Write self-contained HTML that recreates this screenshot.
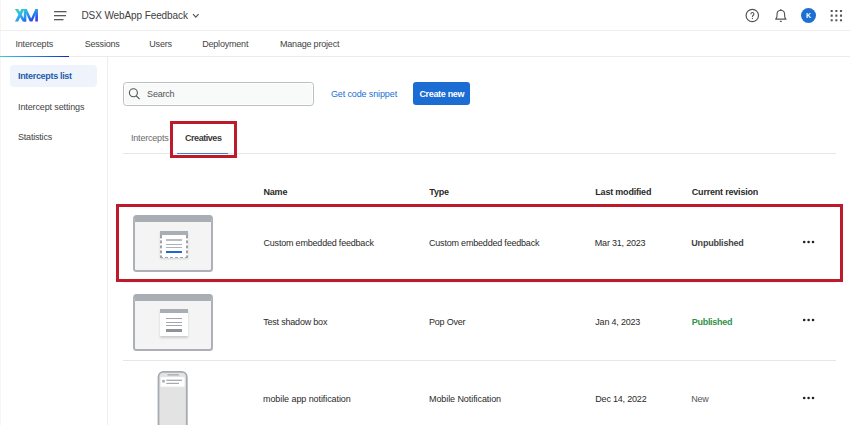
<!DOCTYPE html>
<html><head><meta charset="utf-8">
<style>
*{margin:0;padding:0;box-sizing:border-box}
html,body{width:850px;height:425px;overflow:hidden;background:#fff}
body{position:relative;font-family:"Liberation Sans",sans-serif;color:#2a2a2a}
.a{position:absolute;white-space:nowrap}
.t{position:absolute;white-space:nowrap;font-size:9px;line-height:10px;letter-spacing:-0.2px}
.b{font-weight:bold}
.hl{position:absolute;background:#e6e6e6;height:1px}
</style></head><body>

<div class="a" style="left:0;top:0;width:1px;height:425px;background:#f5f5f5"></div>
<!-- header -->
<svg class="a" style="left:0;top:0" width="50" height="30" viewBox="0 0 50 30">
  <defs>
    <linearGradient id="xg" gradientUnits="userSpaceOnUse" x1="15" y1="9" x2="25.4" y2="28.2">
      <stop offset="0" stop-color="#33d99a"/>
      <stop offset="0.25" stop-color="#32c0e0"/>
      <stop offset="0.5" stop-color="#2b9ef2"/>
      <stop offset="0.78" stop-color="#2356e8"/>
      <stop offset="1" stop-color="#5a2ddf"/>
    </linearGradient>
  </defs>
  <g fill="url(#xg)">
    <polygon points="14.9,9.1 18.1,9.1 26.0,21.5 22.8,21.5"/>
    <polygon points="21.4,9.1 24.5,9.1 18.1,21.5 14.9,21.5"/>
    <rect x="23.8" y="9.1" width="2.5" height="12.4"/>
    <polygon points="23.8,9.1 26.8,9.1 31.1,18.4 35.4,9.1 37.9,9.1 32.4,21.5 29.8,21.5"/>
    <rect x="35.3" y="9.1" width="2.6" height="12.4"/>
  </g>
</svg>
<svg class="a" style="left:53px;top:10px" width="14" height="11" viewBox="0 0 14 11">
  <rect x="1" y="1" width="12.5" height="1.3" fill="#5a5a5a"/>
  <rect x="1" y="5" width="12" height="1.3" fill="#5a5a5a"/>
  <rect x="1" y="9" width="9.5" height="1.3" fill="#5a5a5a"/>
</svg>
<div class="a" style="left:81.5px;top:11px;font-size:10px;line-height:10px;color:#3d3d3d;letter-spacing:-0.1px">DSX WebApp Feedback</div>
<svg class="a" style="left:192px;top:13px" width="8" height="6" viewBox="0 0 8 6"><path d="M1 1.2 L3.8 4.2 L6.6 1.2" fill="none" stroke="#555" stroke-width="1.2"/></svg>

<!-- right icons -->
<svg class="a" style="left:744px;top:8px" width="16" height="16" viewBox="0 0 16 16">
  <circle cx="8.3" cy="7.5" r="6.2" fill="none" stroke="#555" stroke-width="1.2"/>
  <path d="M6.9 6.3 Q6.9 4.5 8.4 4.5 Q9.9 4.5 9.9 6 Q9.9 7 9 7.5 Q8.4 7.9 8.4 8.7 L8.4 9.1" fill="none" stroke="#555" stroke-width="1.1"/><circle cx="8.4" cy="10.4" r="0.65" fill="#555"/>
</svg>
<svg class="a" style="left:774px;top:8px" width="14" height="15" viewBox="0 0 14 15">
  <path d="M1.6 11.1 Q2.9 10.2 3 8 L3 6.2 Q3 2.7 6.8 2.3 Q10.6 2.7 10.6 6.2 L10.6 8 Q10.7 10.2 12 11.1 Z" fill="none" stroke="#555" stroke-width="1.15" stroke-linejoin="round"/>
  <path d="M5.8 2.3 L6.8 1.6 L7.8 2.3 Z" fill="#555" stroke="#555" stroke-width="0.7" stroke-linejoin="round"/>
  <rect x="5.8" y="12.7" width="2" height="1.2" rx="0.4" fill="#555"/>
</svg>
<div class="a" style="left:801px;top:8px;width:15.2px;height:15.2px;border-radius:50%;background:#1f6fd2"></div>
<div class="a b" style="left:801px;top:10.6px;width:15.2px;text-align:center;font-size:7px;line-height:10px;color:#fff">K</div>
<svg class="a" style="left:830px;top:9px" width="14" height="14" viewBox="0 0 14 14" fill="#555"><rect x="0.65" y="0.95" width="2.1" height="2.1" rx="0.5"/><rect x="5.30" y="0.95" width="2.1" height="2.1" rx="0.5"/><rect x="9.95" y="0.95" width="2.1" height="2.1" rx="0.5"/><rect x="0.65" y="5.55" width="2.1" height="2.1" rx="0.5"/><rect x="5.30" y="5.55" width="2.1" height="2.1" rx="0.5"/><rect x="9.95" y="5.55" width="2.1" height="2.1" rx="0.5"/><rect x="0.65" y="10.15" width="2.1" height="2.1" rx="0.5"/><rect x="5.30" y="10.15" width="2.1" height="2.1" rx="0.5"/><rect x="9.95" y="10.15" width="2.1" height="2.1" rx="0.5"/></svg>
<div class="hl" style="left:0;top:30px;width:850px;background:#efefef"></div>

<!-- nav -->
<div class="t" style="left:15.5px;top:39px;color:#444">Intercepts</div>
<div class="t" style="left:84.7px;top:39px;color:#444">Sessions</div>
<div class="t" style="left:149.3px;top:39px;color:#444">Users</div>
<div class="t" style="left:202.2px;top:39px;color:#444">Deployment</div>
<div class="t" style="left:280px;top:39px;color:#444">Manage project</div>
<div class="hl" style="left:0;top:56px;width:850px;background:#ececec"></div>
<div class="a" style="left:0;top:55.6px;width:69px;height:1.7px;background:linear-gradient(90deg,#3ccfc0,#28b0ea 20%,#1e86e4 50%,#1a4fd0 80%,#1a22b5)"></div>

<!-- sidebar -->
<div class="a" style="left:107px;top:57px;width:1px;height:368px;background:#eeeeee"></div>
<div class="a" style="left:10px;top:64.8px;width:87px;height:22.3px;border-radius:4px;background:#eff4fc"></div>
<div class="t b" style="left:18px;top:70.6px;color:#1f5aae;letter-spacing:-0.32px">Intercepts list</div>
<div class="t" style="left:18px;top:101.8px;color:#444;letter-spacing:-0.12px">Intercept settings</div>
<div class="t" style="left:18px;top:132.1px;color:#444">Statistics</div>

<!-- toolbar -->
<div class="a" style="left:123px;top:82px;width:191px;height:23.6px;border:1.6px solid #bcbebf;border-radius:3.5px;background:#f8f9f9;box-shadow:inset 0 0 0 1px #fff"></div>
<svg class="a" style="left:127px;top:87px" width="15" height="15" viewBox="0 0 15 15">
  <circle cx="6.4" cy="5.8" r="4" fill="none" stroke="#555" stroke-width="1.1"/>
  <path d="M9.3 8.8 L12.6 12.1" stroke="#555" stroke-width="1.2"/>
</svg>
<div class="t" style="left:147.1px;top:89.1px;color:#555">Search</div>
<div class="t" style="left:330.9px;top:88.9px;color:#2270d4;letter-spacing:-0.12px">Get code snippet</div>
<div class="a" style="left:413px;top:82.3px;width:56.5px;height:23.2px;border-radius:3px;background:#1b6cd3"></div>
<div class="t b" style="left:419.4px;top:89px;color:#fff;letter-spacing:-0.32px">Create new</div>

<!-- tabs -->
<div class="t" style="left:131px;top:132.8px;color:#6b6b6b">Intercepts</div>
<div class="t b" style="left:185px;top:132.8px;color:#3a3a3a;letter-spacing:-0.45px">Creatives</div>
<div class="hl" style="left:123px;top:153px;width:713px"></div>
<div class="a" style="left:177px;top:152.5px;width:51px;height:1.5px;background:#3b82e0"></div>
<div class="a" style="left:170px;top:121px;width:67px;height:37px;border:3px solid #bd1a2c"></div>

<!-- table header -->
<div class="t b" style="left:263.5px;top:186.8px">Name</div>
<div class="t b" style="left:429.3px;top:186.8px">Type</div>
<div class="t b" style="left:595.3px;top:186.8px">Last modified</div>
<div class="t b" style="left:691.8px;top:186.8px">Current revision</div>

<!-- row 1 -->
<div class="hl" style="left:123px;top:282px;width:713px;background:#eef2f2"></div>
<div class="a" style="left:133px;top:215px;width:80px;height:57px;border:2px solid #adb1b6;border-top:7px solid #a9aeb4;border-radius:3.5px;background:#f4f4f4"></div>
<div class="a" style="left:160px;top:230.8px;width:28px;height:27.5px;box-shadow:0 1px 2px rgba(0,0,0,.12)">
  <div class="a" style="left:0;top:0;width:100%;height:4px;background:#a9aeb4"></div>
  <div class="a" style="left:0;top:4px;width:28px;height:23.5px;background:#fff"></div>
  <div class="a" style="left:0;top:4px;width:1.6px;height:23.5px;background:repeating-linear-gradient(to bottom,#a0a4a9 0 2.6px,transparent 2.6px 5.05px) 0 0.4px"></div>
  <div class="a" style="left:26.4px;top:4px;width:1.6px;height:23.5px;background:repeating-linear-gradient(to bottom,#a0a4a9 0 2.6px,transparent 2.6px 5.05px) 0 0.4px"></div>
  <div class="a" style="left:0;top:25.9px;width:28px;height:1.6px;background:repeating-linear-gradient(to right,#a0a4a9 0 2.6px,transparent 2.6px 5.1px)"></div>
  <div class="a" style="left:6px;top:8.5px;width:16px;height:1.5px;background:#b9bdc1"></div>
  <div class="a" style="left:6px;top:12.8px;width:16px;height:1.2px;background:#aeb2b6"></div>
  <div class="a" style="left:6px;top:16px;width:16px;height:1.2px;background:#aeb2b6"></div>
  <div class="a" style="left:6px;top:20.2px;width:16px;height:2.4px;background:#2366d1"></div>
</div>
<div class="t" style="left:263.5px;top:238px">Custom embedded feedback</div>
<div class="t" style="left:429px;top:238px">Custom embedded feedback</div>
<div class="t" style="left:594.8px;top:238px">Mar 31, 2023</div>
<div class="t b" style="left:691.3px;top:238px;color:#444">Unpublished</div>
<svg class="a" style="left:802px;top:240px" width="14" height="4" viewBox="0 0 14 4" fill="#222">
  <circle cx="2.2" cy="2" r="1.3"/><circle cx="6.6" cy="2" r="1.3"/><circle cx="11" cy="2" r="1.3"/>
</svg>
<div class="a" style="left:116px;top:204px;width:727px;height:78px;border:3px solid #bd1a2c"></div>

<!-- row 2 -->
<div class="a" style="left:133px;top:293.5px;width:80px;height:57px;border:2px solid #adb1b6;border-top:7px solid #a9aeb4;border-radius:3.5px;background:#f4f4f4"></div>
<div class="a" style="left:160.1px;top:309.2px;width:27.5px;height:27px;background:#fff;box-shadow:0 1.5px 2px rgba(0,0,0,.16)">
  <div class="a" style="left:0;top:0;width:100%;height:3.8px;background:#a9aeb4"></div>
  <div class="a" style="left:6px;top:8.5px;width:15.7px;height:1.2px;background:#a3a7ac"></div>
  <div class="a" style="left:6px;top:12.8px;width:15.7px;height:1.2px;background:#a3a7ac"></div>
  <div class="a" style="left:6px;top:15.7px;width:15.7px;height:1.2px;background:#a3a7ac"></div>
  <div class="a" style="left:6px;top:20px;width:15.7px;height:2.7px;background:#8e9398"></div>
</div>
<div class="t" style="left:263.2px;top:316.6px">Test shadow box</div>
<div class="t" style="left:429px;top:316.6px">Pop Over</div>
<div class="t" style="left:595.3px;top:316.6px">Jan 4, 2023</div>
<div class="t b" style="left:691.8px;top:316.6px;color:#33914a;letter-spacing:-0.3px">Published</div>
<svg class="a" style="left:802px;top:317.8px" width="14" height="4" viewBox="0 0 14 4" fill="#222">
  <circle cx="2.2" cy="2" r="1.3"/><circle cx="6.6" cy="2" r="1.3"/><circle cx="11" cy="2" r="1.3"/>
</svg>
<div class="hl" style="left:123px;top:360px;width:713px"></div>

<!-- row 3 -->
<svg class="a" style="left:150px;top:365px" width="50" height="60" viewBox="0 0 50 60">
  <rect x="8.5" y="6.9" width="28.3" height="70" rx="5" fill="#e3e3e3" stroke="#a6abb1" stroke-width="1.8"/>
  <rect x="17.5" y="9.2" width="11.5" height="1.3" fill="#a6abb1"/>
  <rect x="10.6" y="12.1" width="24" height="9.6" fill="#fff"/>
  <rect x="12.2" y="14.9" width="2.6" height="2.6" fill="#a6abb1"/>
  <rect x="16.3" y="14.65" width="15.7" height="1.3" fill="#a6abb1"/>
  <rect x="16.3" y="17.8" width="12.7" height="1.2" fill="#a6abb1"/>
</svg>
<div class="t" style="left:263px;top:394.2px;letter-spacing:-0.08px">mobile app notification</div>
<div class="t" style="left:429px;top:394.2px;letter-spacing:-0.08px">Mobile Notification</div>
<div class="t" style="left:595.3px;top:394.2px">Dec 14, 2022</div>
<div class="t" style="left:691.2px;top:394.2px;color:#555">New</div>
<svg class="a" style="left:802px;top:396px" width="14" height="4" viewBox="0 0 14 4" fill="#222">
  <circle cx="2.2" cy="2" r="1.3"/><circle cx="6.6" cy="2" r="1.3"/><circle cx="11" cy="2" r="1.3"/>
</svg>

</body></html>
